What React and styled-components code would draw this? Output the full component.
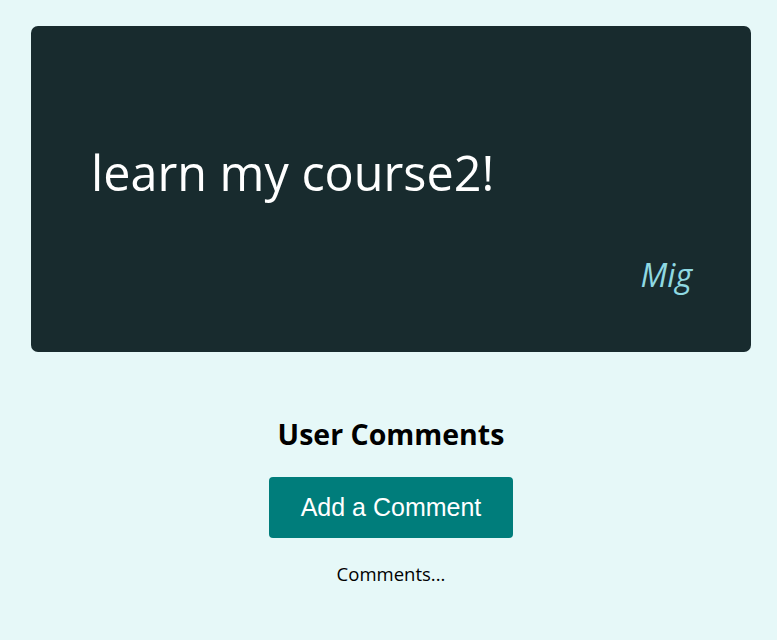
import React from "react";
import styled, { createGlobalStyle } from "styled-components";

const Global = createGlobalStyle`
  html, body { margin: 0; padding: 0; }
  body {
    background: #e6f8f8;
    font-family: "Open Sans", "Noto Sans", sans-serif;
    width: 777px;
    min-height: 640px;
  }
`;

const Page = styled.main`
  padding: 26px 26px 40px 31px;
  display: flex;
  flex-direction: column;
  align-items: stretch;
`;

const Card = styled.section`
  background: #182b2e;
  border-radius: 7px;
  height: 326px;
  box-sizing: border-box;
  padding: 114px 59px 0 60px;
  display: flex;
  flex-direction: column;
`;

const Title = styled.h1`
  margin: 0;
  color: #ffffff;
  font-weight: 400;
  font-size: 48.5px;
  line-height: 64px;
`;

const Author = styled.div`
  align-self: flex-end;
  margin-top: 51px;
  color: #8fd9e2;
  font-style: italic;
  font-size: 32px;
  line-height: 40px;
`;

const Comments = styled.section`
  display: flex;
  flex-direction: column;
  align-items: center;
  padding-top: 64px;
`;

const Heading = styled.h2`
  margin: 0;
  font-size: 28.5px;
  font-weight: 700;
  line-height: 36px;
  color: #000;
`;

const Button = styled.button`
  margin-top: 25px;
  width: 244px;
  height: 61px;
  border: none;
  border-radius: 4px;
  background: #007d7b;
  color: #fff;
  font-family: "Liberation Sans", Arial, sans-serif;
  font-size: 25px;
  cursor: pointer;
`;

const Placeholder = styled.p`
  margin: 24px 0 0;
  font-size: 18.5px;
  line-height: 24px;
  color: #000;
`;

export default function App() {
  return (
    <>
      <Global />
      <Page>
        <Card>
          <Title>learn my course2!</Title>
          <Author>Mig</Author>
        </Card>
        <Comments>
          <Heading>User Comments</Heading>
          <Button>Add a Comment</Button>
          <Placeholder>Comments...</Placeholder>
        </Comments>
      </Page>
    </>
  );
}
